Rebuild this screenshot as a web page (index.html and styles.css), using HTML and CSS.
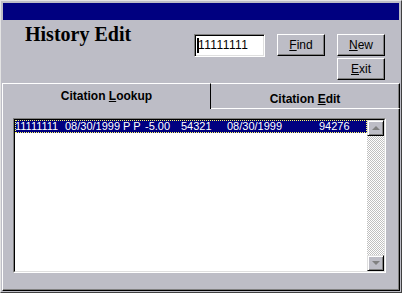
FILE: index.html
```html
<!DOCTYPE html>
<html lang="en">
<head>
    <meta charset="UTF-8">
    <title>History Edit</title>
    <link rel="stylesheet" href="styles.css">
</head>
<body>

<div class="window">
    <div class="titlebar"></div>

    <div class="header">
        <h1 class="title">History Edit</h1>
        <div class="field"><span class="caret"></span>11111111</div>
        <button type="button" class="btn find"><u>F</u>ind</button>
        <div class="btn-col">
            <button type="button" class="btn"><u>N</u>ew</button>
            <button type="button" class="btn"><u>E</u>xit</button>
        </div>
    </div>

    <div class="tabs">
        <div class="tab active">Citation <u>L</u>ookup</div>
        <div class="tab">Citation <u>E</u>dit</div>
    </div>

    <div class="panel">
        <div class="listbox">
            <div class="listbox-inner">
                <div class="list-items">
                    <div class="row selected">
                        <span class="c1">11111111</span><span class="c2">08/30/1999</span><span class="c3">P P</span><span class="c4">-5.00</span><span class="c5">54321</span><span class="c6">08/30/1999</span><span>94276</span>
                    </div>
                </div>
                <div class="scrollbar">
                    <div class="sb-btn"><span class="arrow up"></span></div>
                    <div class="sb-track"></div>
                    <div class="sb-btn"><span class="arrow down"></span></div>
                </div>
            </div>
        </div>
    </div>
</div>

</body>
</html>
```

FILE: styles.css
```css
body {
    margin: 0;
    background-color: #bdbdc6;
    font-family: "Liberation Sans", Arial, sans-serif;
}

.window {
    width: 402px;
    height: 293px;
    box-sizing: border-box;
    border: 1px solid;
    border-color: #e4e4e4 #404040 #404040 #e4e4e4;
    padding: 1px;
    display: flex;
    flex-direction: column;
    background-color: #bdbdc6;
}

.titlebar {
    height: 17px;
    margin: 1px 1px 0 1px;
    background-color: #000080;
}

/* header: title, lookup field, buttons */
.header {
    height: 63px;
    display: flex;
    align-items: flex-start;
    padding-left: 23px;
}

.title {
    width: 169px;
    margin: 4px 0 0 0;
    font-family: "Liberation Serif", "Times New Roman", serif;
    font-size: 20px;
    line-height: 20px;
    font-weight: bold;
    color: #000;
}

.field {
    width: 71px;
    height: 23px;
    margin-top: 14px;
    box-sizing: border-box;
    border: 1px solid;
    border-color: #808080 #fff #fff #808080;
    box-shadow: inset 1px 1px #000, inset -1px -1px #dfdfdf;
    background-color: #fff;
    font-size: 12px;
    line-height: 21px;
    padding-left: 2px;
    display: flex;
    align-items: center;
    letter-spacing: 0.4px;
}

.caret {
    display: inline-block;
    width: 2px;
    height: 15px;
    background-color: #000;
    margin-right: -1px;
}

.btn {
    width: 48px;
    height: 22px;
    box-sizing: border-box;
    margin: 0;
    padding: 0;
    border: 1px solid;
    border-color: #fff #000 #000 #fff;
    box-shadow: inset -1px -1px #808080;
    background-color: #bdbdc6;
    font-family: "Liberation Sans", Arial, sans-serif;
    font-size: 12px;
    color: #000;
}

.find {
    margin: 14px 12px 0 12px;
}

.btn-col {
    display: flex;
    flex-direction: column;
    gap: 2px;
    margin-top: 14px;
}

/* tabs */
.tabs {
    height: 26px;
    display: flex;
}

.tab {
    box-sizing: border-box;
    font-size: 12px;
    font-weight: bold;
    text-align: center;
}

.tab.active {
    width: 209px;
    border-top: 1px solid #fff;
    border-left: 1px solid #fff;
    border-right: 1px solid #000;
    padding-top: 5px;
}

.tab:not(.active) {
    flex: 1;
    border-top: 1px solid #fff;
    border-right: 1px solid #000;
    border-bottom: 1px solid #fff;
    box-shadow: inset -1px 0 #808080;
    padding-top: 8px;
}

.panel {
    flex: 1;
    border-left: 1px solid #fff;
    border-right: 1px solid #000;
    border-bottom: 1px solid #000;
    box-shadow: inset -1px -1px #808080;
    padding: 9px 0 0 10px;
}

/* list */
.listbox {
    width: 373px;
    height: 155px;
    box-sizing: border-box;
    border: 1px solid;
    border-color: #808080 #fff #fff #808080;
}

.listbox-inner {
    height: 100%;
    box-sizing: border-box;
    border: 1px solid;
    border-color: #000 #dfdfdf #dfdfdf #000;
    display: flex;
    background-color: #fff;
}

.list-items {
    flex: 1;
}

.row {
    height: 13px;
    font-size: 11px;
    line-height: 13px;
    white-space: nowrap;
}

.row span {
    display: inline-block;
}

.row.selected {
    background-color: #000080;
    color: #fff;
    outline: 1px dotted #ffff66;
    outline-offset: -1px;
}

.c1 { width: 50px; }
.c2 { width: 58px; }
.c3 { width: 22px; }
.c4 { width: 36px; }
.c5 { width: 46px; }
.c6 { width: 92px; }

.scrollbar {
    width: 17px;
    display: flex;
    flex-direction: column;
}

.sb-track {
    flex: 1;
    background: repeating-conic-gradient(#c0c0c0 0 25%, #fff 0 50%) 0 0 / 2px 2px;
}

.sb-btn {
    height: 16px;
    box-sizing: border-box;
    border: 1px solid;
    border-color: #dfdfdf #000 #000 #dfdfdf;
    box-shadow: inset 1px 1px #fff, inset -1px -1px #808080;
    background-color: #bdbdc6;
    display: flex;
    align-items: center;
    justify-content: center;
}

.arrow {
    width: 0;
    height: 0;
    border-left: 4px solid transparent;
    border-right: 4px solid transparent;
}

.arrow.up {
    border-bottom: 4px solid #808080;
}

.arrow.down {
    border-top: 4px solid #808080;
}
```
